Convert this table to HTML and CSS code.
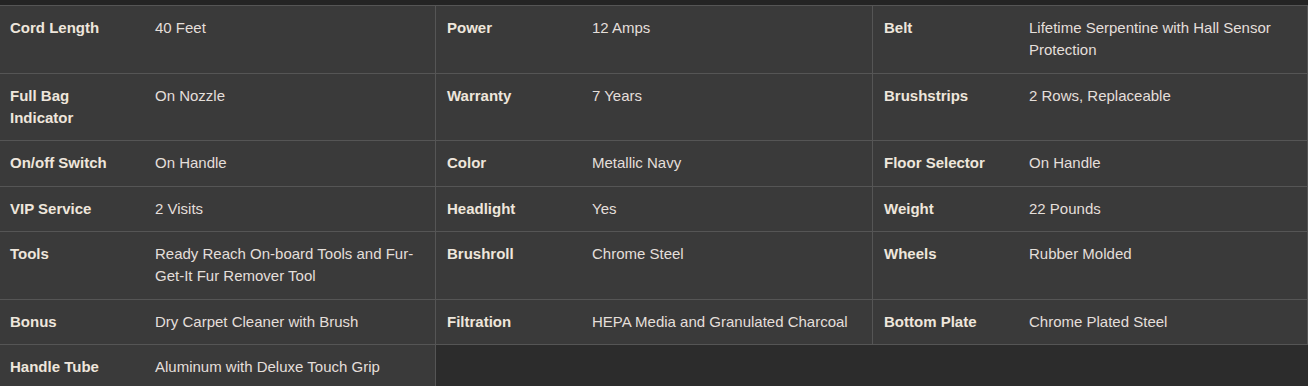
FILE: index.html
```html
<!DOCTYPE html>
<html>
<head>
<meta charset="utf-8">
<link rel="stylesheet" href="styles.css">
</head>
<body>
<div class="strip"></div>
<div class="specs">
  <div class="item"><div class="label">Cord Length</div><div class="value">40 Feet</div></div>
  <div class="item"><div class="label">Power</div><div class="value">12 Amps</div></div>
  <div class="item"><div class="label">Belt</div><div class="value">Lifetime Serpentine with Hall Sensor Protection</div></div>

  <div class="item"><div class="label">Full Bag Indicator</div><div class="value">On Nozzle</div></div>
  <div class="item"><div class="label">Warranty</div><div class="value">7 Years</div></div>
  <div class="item"><div class="label">Brushstrips</div><div class="value">2 Rows, Replaceable</div></div>

  <div class="item"><div class="label">On/off Switch</div><div class="value">On Handle</div></div>
  <div class="item"><div class="label">Color</div><div class="value">Metallic Navy</div></div>
  <div class="item"><div class="label">Floor Selector</div><div class="value">On Handle</div></div>

  <div class="item"><div class="label">VIP Service</div><div class="value">2 Visits</div></div>
  <div class="item"><div class="label">Headlight</div><div class="value">Yes</div></div>
  <div class="item"><div class="label">Weight</div><div class="value">22 Pounds</div></div>

  <div class="item"><div class="label">Tools</div><div class="value">Ready Reach On-board Tools and Fur-Get-It Fur Remover Tool</div></div>
  <div class="item"><div class="label">Brushroll</div><div class="value">Chrome Steel</div></div>
  <div class="item"><div class="label">Wheels</div><div class="value">Rubber Molded</div></div>

  <div class="item"><div class="label">Bonus</div><div class="value">Dry Carpet Cleaner with Brush</div></div>
  <div class="item"><div class="label">Filtration</div><div class="value">HEPA Media and Granulated Charcoal</div></div>
  <div class="item"><div class="label">Bottom Plate</div><div class="value">Chrome Plated Steel</div></div>

  <div class="item"><div class="label">Handle Tube</div><div class="value">Aluminum with Deluxe Touch Grip</div></div>
</div>
</body>
</html>
```

FILE: styles.css
```css
html, body {
  margin: 0;
  padding: 0;
  background: #2c2c2c;
  font-family: "Liberation Sans", Arial, sans-serif;
  font-size: 15px;
  line-height: 22px;
}

.strip {
  height: 5px;
  background: #242424;
}

.specs {
  display: grid;
  grid-template-columns: 436px 437px 1fr;
  border-top: 1px solid #555555;
}

.item {
  display: grid;
  grid-template-columns: 145px 1fr;
  background: #3a3a3a;
  border-right: 1px solid #555555;
  border-bottom: 1px solid #555555;
}

.item:nth-child(3n+2),
.item:nth-child(3n) {
  padding-left: 1px;
}

.label,
.value {
  padding: 11px 10px 11.5px 10px;
}

.label {
  font-weight: bold;
  color: #eee6dc;
}

.value {
  color: #e4dfda;
}
```
